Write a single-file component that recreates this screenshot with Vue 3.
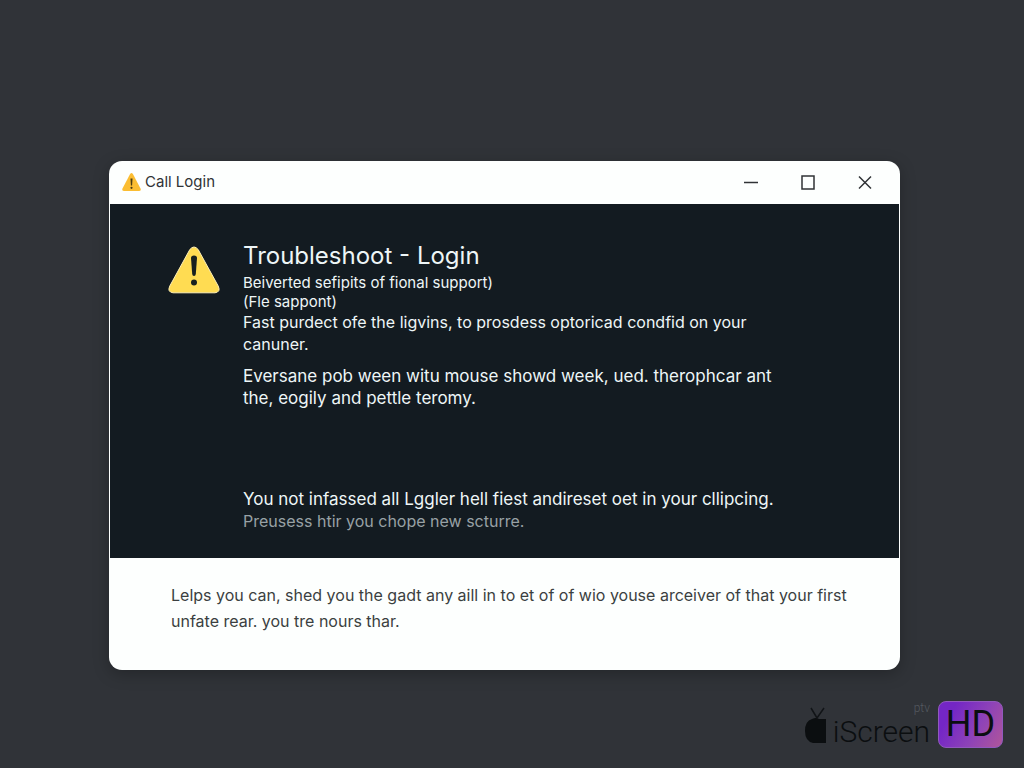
<script setup>
const details = ['Beiverted sefipits of fional support)', '(Fle sappont)']
</script>

<template>
  <main class="desktop">
    <section class="window" aria-labelledby="window-title">
      <header class="titlebar">
        <svg class="title-icon" viewBox="0 0 20 20" aria-hidden="true">
          <path d="M8.6 2Q10 .2 11.4 2L19 16.4Q20 18.8 17.5 19H2.5Q0 18.8 1 16.4Z" fill="#fbbd32" />
          <path d="M9 6.5h2l-.4 7H9.4Z" fill="#4a3b12" />
          <circle cx="10" cy="15.8" r="1.1" fill="#4a3b12" />
        </svg>
        <span id="window-title" class="title">Call Login</span>
        <div class="controls">
          <button type="button" aria-label="Minimize">
            <svg viewBox="0 0 16 16"><path d="M1 8.5h14" /></svg>
          </button>
          <button type="button" aria-label="Maximize">
            <svg viewBox="0 0 16 16"><path d="M2 2h12v13H2Z" /></svg>
          </button>
          <button type="button" aria-label="Close">
            <svg viewBox="0 0 16 16"><path d="M2 2.5l12 12M14 2.5l-12 12" /></svg>
          </button>
        </div>
      </header>

      <div class="body">
        <svg class="warning" viewBox="0 0 52 48" aria-hidden="true">
          <path d="M21.8 3.6Q26-1.6 30.2 3.6L50.2 40Q53 46 47 46.8H5Q-1 46 1.8 40Z" fill="#ffdc52" stroke="#fff0b5" stroke-width="1" />
          <path d="M23 12Q23 9.5 26 9.5T29 12L27.8 28Q27.6 30 26 30T24.2 28Z" fill="#17201f" />
          <circle cx="26" cy="36.5" r="3" fill="#17201f" />
        </svg>
        <div class="message">
          <h1>Troubleshoot - Login</h1>
          <p v-for="line in details" :key="line" class="detail">{{ line }}</p>
          <p class="para">Fast purdect ofe the ligvins, to prosdess optoricad condfid on your<br>canuner.</p>
          <p class="para large second">Eversane pob ween witu mouse showd week, ued. therophcar ant<br>the, eogily and pettle teromy.</p>
          <p class="para large third">You not infassed all Lggler hell fiest andireset oet in your cllipcing.</p>
          <p class="para muted">Preusess htir you chope new scturre.</p>
        </div>
      </div>

      <footer class="footer">
        <p>Lelps you can, shed you the gadt any aill in to et of of wio youse arceiver of that your first<br>unfate rear. you tre nours thar.</p>
      </footer>
    </section>

    <div class="brand">
      <svg class="tv" viewBox="0 0 22 36" aria-hidden="true">
        <path d="M6 1l6 10M19 1l-7 10" fill="none" stroke="#111417" stroke-width="1.5" />
        <path d="M7 12Q11 10 14 12H21V36H8Q0 34 0 24Q0 14 7 12Z" fill="#0b0e10" />
      </svg>
      <div class="wordmark">
        <span class="tag">ptv</span>
        <span class="name">iScreen</span>
      </div>
      <span class="hd">HD</span>
    </div>
  </main>
</template>

<style>
body {
  margin: 0;
  background: #303338;
}
</style>

<style scoped>
.desktop {
  box-sizing: border-box;
  display: flex;
  flex-direction: column;
  justify-content: space-between;
  min-height: 100vh;
  padding: 161px 0 20px;
  background: #303338;
  font-family: Inter, "Noto Sans", sans-serif;
}

.window {
  margin: 0 124px 0 109px;
  border-radius: 13px;
  background: #fdfffe;
  box-shadow: 0 4px 16px rgba(0, 0, 0, 0.25);
}

.titlebar {
  box-sizing: border-box;
  display: flex;
  align-items: center;
  height: 43px;
  padding: 0 12px 2px;
}

.title-icon {
  width: 21px;
  height: 20px;
}

.title {
  margin-left: 3px;
  font-size: 15px;
  color: #303336;
}

.controls {
  display: flex;
  gap: 25px;
  margin-left: auto;
}

.controls button {
  display: grid;
  place-items: center;
  width: 32px;
  height: 32px;
  padding: 0;
  border: 0;
  background: none;
}

.controls button + button + button {
  margin-right: 7px;
}

.controls svg {
  width: 16px;
  height: 16px;
  fill: none;
  stroke: #303336;
  stroke-width: 1.5;
}

.body {
  display: flex;
  align-items: flex-start;
  gap: 23px;
  margin: 0 1px;
  padding: 36px 48px 26px 58px;
  background: #131b21;
  color: #eef6f7;
}

.warning {
  flex: none;
  width: 52px;
  height: 48px;
  margin-top: 6px;
}

.message {
  flex: 1;
}

h1,
p {
  margin: 0;
  white-space: nowrap;
}

h1 {
  padding-bottom: 1px;
  font-size: 24px;
  line-height: 32px;
  font-weight: 400;
}

.detail {
  font-size: 15px;
  line-height: 19px;
}

.para {
  font-size: 16px;
  line-height: 22px;
}

.large {
  font-size: 17px;
}

.second {
  margin-top: 10px;
}

.third {
  margin-top: 79px;
}

.muted {
  color: #98a1a5;
}

.footer {
  padding: 24px 62px 36px;
  font-size: 16px;
  line-height: 26px;
  color: #3b3f41;
}

.brand {
  display: flex;
  align-items: center;
  align-self: flex-end;
  margin-right: 21px;
  color: #0b0e10;
  font-family: Roboto, sans-serif;
  font-weight: 300;
}

.tv {
  width: 22px;
  height: 36px;
  margin-right: 6px;
}

.wordmark {
  display: flex;
  flex-direction: column;
}

.tag {
  align-self: flex-end;
  font-size: 12px;
  line-height: 14px;
  color: #555a60;
}

.name {
  font-size: 30px;
  line-height: 33px;
}

.hd {
  box-sizing: border-box;
  width: 65px;
  margin-left: 8px;
  border: 1px solid #9059bd;
  border-radius: 8px;
  background: linear-gradient(120deg, #7426c5 20%, #8d42b8 60%, #b0569a);
  font-size: 36px;
  font-weight: 400;
  line-height: 45px;
  text-align: center;
}
</style>
